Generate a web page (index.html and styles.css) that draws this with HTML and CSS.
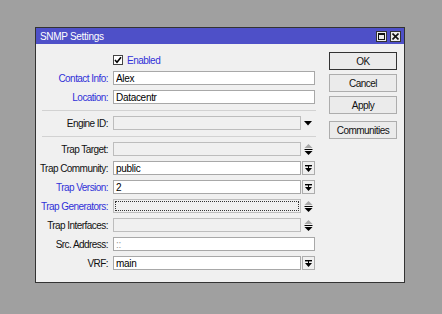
FILE: index.html
```html
<!DOCTYPE html>
<html lang="en">
<head>
<meta charset="UTF-8">
<meta name="viewport" content="width=device-width, initial-scale=1.0">
<title>SNMP Settings</title>
<link rel="stylesheet" href="styles.css">
</head>
<body>

<div class="window">
    <div class="titlebar">
        <span class="title">SNMP Settings</span>
        <div class="title-buttons">
            <span class="tbtn">
                <svg width="7" height="7" viewBox="0 0 7 7"><rect x="0.5" y="0.5" width="6" height="6" fill="none" stroke="#111"/><rect x="0" y="0" width="7" height="2" fill="#111"/></svg>
            </span>
            <span class="tbtn">
                <svg width="7" height="7" viewBox="0 0 7 7"><path d="M0.5 0.5 L6.5 6.5 M6.5 0.5 L0.5 6.5" stroke="#111" stroke-width="1.6"/></svg>
            </span>
        </div>
    </div>

    <div class="content">
        <div class="form">
            <div class="row">
                <span class="label"></span>
                <label class="check">
                    <span class="box">
                        <svg width="8" height="8" viewBox="0 0 8 8"><path d="M1 4 L3 6.2 L7 1.2" fill="none" stroke="#000" stroke-width="1.6"/></svg>
                    </span>
                    <span class="blue">Enabled</span>
                </label>
            </div>
            <div class="row">
                <span class="label blue">Contact Info:</span>
                <div class="field"><input class="input" type="text" value="Alex"></div>
            </div>
            <div class="row">
                <span class="label blue">Location:</span>
                <div class="field"><input class="input" type="text" value="Datacentr"></div>
            </div>

            <div class="sep"></div>

            <div class="row">
                <span class="label">Engine ID:</span>
                <div class="field">
                    <input class="input short off" type="text" disabled>
                    <span class="side">
                        <svg width="8" height="5" viewBox="0 0 8 5"><polygon points="0,0 8,0 4,4.5" fill="#000"/></svg>
                    </span>
                </div>
            </div>

            <div class="sep"></div>

            <div class="row">
                <span class="label">Trap Target:</span>
                <div class="field">
                    <input class="input short off" type="text" disabled>
                    <span class="side">
                        <svg width="9" height="11" viewBox="0 0 9 11"><polygon points="0.5,4 4.5,0 8.5,4" fill="#a8a8a8"/><rect x="0.5" y="5" width="8" height="1" fill="#000"/><polygon points="0.5,7 8.5,7 4.5,11" fill="#000"/></svg>
                    </span>
                </div>
            </div>
            <div class="row">
                <span class="label">Trap Community:</span>
                <div class="field">
                    <input class="input short" type="text" value="public">
                    <span class="drop">
                        <svg width="7" height="7" viewBox="0 0 7 7"><rect x="0" y="0" width="7" height="1.4" fill="#000"/><rect x="3" y="1" width="1" height="2" fill="#000"/><polygon points="0,3 7,3 3.5,7" fill="#000"/></svg>
                    </span>
                </div>
            </div>
            <div class="row">
                <span class="label blue">Trap Version:</span>
                <div class="field">
                    <input class="input short" type="text" value="2">
                    <span class="drop">
                        <svg width="7" height="7" viewBox="0 0 7 7"><rect x="0" y="0" width="7" height="1.4" fill="#000"/><rect x="3" y="1" width="1" height="2" fill="#000"/><polygon points="0,3 7,3 3.5,7" fill="#000"/></svg>
                    </span>
                </div>
            </div>
            <div class="row">
                <span class="label blue">Trap Generators:</span>
                <div class="field">
                    <input class="input short off focus" type="text" readonly>
                    <span class="side">
                        <svg width="9" height="11" viewBox="0 0 9 11"><polygon points="0.5,4 4.5,0 8.5,4" fill="#a8a8a8"/><rect x="0.5" y="5" width="8" height="1" fill="#000"/><polygon points="0.5,7 8.5,7 4.5,11" fill="#000"/></svg>
                    </span>
                </div>
            </div>
            <div class="row">
                <span class="label">Trap Interfaces:</span>
                <div class="field">
                    <input class="input short off" type="text" disabled>
                    <span class="side">
                        <svg width="9" height="11" viewBox="0 0 9 11"><polygon points="0.5,4 4.5,0 8.5,4" fill="#a8a8a8"/><rect x="0.5" y="5" width="8" height="1" fill="#000"/><polygon points="0.5,7 8.5,7 4.5,11" fill="#000"/></svg>
                    </span>
                </div>
            </div>
            <div class="row">
                <span class="label">Src. Address:</span>
                <div class="field"><input class="input faint" type="text" value="::"></div>
            </div>
            <div class="row">
                <span class="label">VRF:</span>
                <div class="field">
                    <input class="input short" type="text" value="main">
                    <span class="drop">
                        <svg width="7" height="7" viewBox="0 0 7 7"><rect x="0" y="0" width="7" height="1.4" fill="#000"/><rect x="3" y="1" width="1" height="2" fill="#000"/><polygon points="0,3 7,3 3.5,7" fill="#000"/></svg>
                    </span>
                </div>
            </div>
        </div>

        <div class="buttons">
            <button class="btn default">OK</button>
            <button class="btn">Cancel</button>
            <button class="btn">Apply</button>
            <button class="btn extra">Communities</button>
        </div>
    </div>
</div>

</body>
</html>
```

FILE: styles.css
```css
body {
    margin: 0;
    background-color: #a0a0a0;
    font-family: "Liberation Sans Narrow", "Liberation Sans", Arial, sans-serif;
    font-size: 10px;
    color: #111;
}

.window {
    margin: 27px 0 0 35px;
    width: 370px;
    height: 256px;
    box-sizing: border-box;
    border: 1px solid #333;
    background: #f0f0f0;
    display: flex;
    flex-direction: column;
}

.titlebar {
    height: 16px;
    background-color: #4e50c8;
    color: #fff;
    display: flex;
    align-items: center;
    justify-content: space-between;
    padding: 0 3px 0 4px;
    letter-spacing: -0.3px;
}

.title-buttons {
    display: flex;
    gap: 3px;
}

.tbtn {
    width: 11px;
    height: 11px;
    box-sizing: border-box;
    border: 1px solid #333;
    background: #ececec;
    display: flex;
    justify-content: center;
    align-items: center;
}

.content {
    flex: 1;
    display: flex;
    gap: 13px;
    padding: 8px 7px 0 6px;
}

.form {
    width: 274px;
    display: flex;
    flex-direction: column;
    gap: 5px;
}

.row {
    height: 14px;
    display: flex;
    align-items: center;
    gap: 5px;
}

.label {
    width: 66px;
    flex-shrink: 0;
    display: flex;
    justify-content: flex-end;
    white-space: nowrap;
    letter-spacing: -0.55px;
}

.blue {
    color: #3030d8;
}

.check {
    display: flex;
    align-items: center;
    gap: 4px;
    margin-top: 2px;
    letter-spacing: -0.5px;
}

.check .box {
    width: 10px;
    height: 10px;
    box-sizing: border-box;
    border: 1px solid #444;
    background: #fff;
    display: flex;
    justify-content: center;
    align-items: center;
}

.field {
    width: 202px;
    display: flex;
    align-items: center;
}

.input {
    box-sizing: border-box;
    width: 100%;
    height: 14px;
    margin: 0;
    padding: 0 2px;
    border: 1px solid #a8a8a8;
    background: #fff;
    font: inherit;
    letter-spacing: -0.3px;
    color: #000;
    outline: none;
}

.input.short {
    width: 188px;
}

.input.off {
    background: #f0f0f0;
    border-color: #bdbdbd;
}

.input.focus {
    outline: 1px dotted #333;
    outline-offset: -3px;
}

.input.faint {
    color: #999;
}

.side {
    width: 14px;
    display: flex;
    justify-content: center;
}

.drop {
    width: 13px;
    height: 14px;
    margin-left: 1px;
    box-sizing: border-box;
    border: 1px solid #adadad;
    background: #f0f0f0;
    display: flex;
    justify-content: center;
    align-items: center;
}

.sep {
    height: 1px;
    margin-top: 1px;
    background: #d2d2d2;
}

.buttons {
    width: 68px;
    display: flex;
    flex-direction: column;
    gap: 4px;
}

.btn {
    height: 18px;
    padding: 0;
    border: 1px solid #adadad;
    background: #ebebeb;
    font: inherit;
    letter-spacing: -0.55px;
    color: #111;
}

.btn.default {
    border-color: #333;
}

.btn.extra {
    margin-top: 3px;
}
```
